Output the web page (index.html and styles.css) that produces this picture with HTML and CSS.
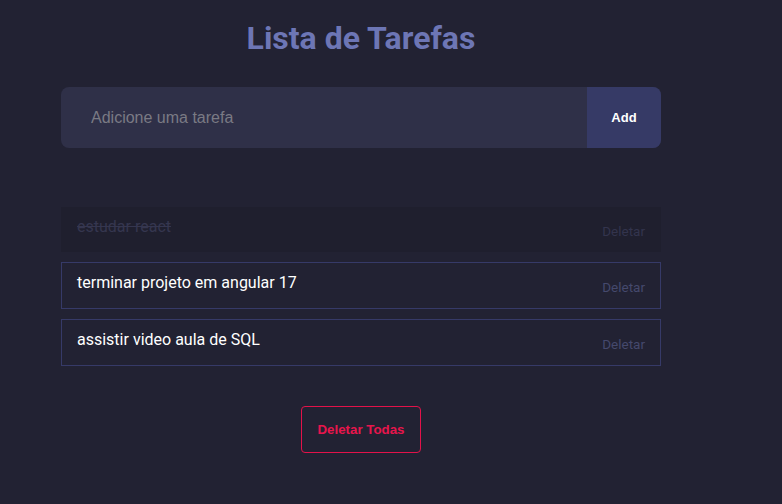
FILE: index.html
```html
<!DOCTYPE html>
<html lang="pt">
<head>
<meta charset="utf-8">
<title>Lista de Tarefas</title>
<link rel="stylesheet" href="styles.css">
</head>
<body>
<main class="app">
  <h1 class="title">Lista de Tarefas</h1>
  <form class="add-form">
    <input class="add-input" type="text" placeholder="Adicione uma tarefa">
    <button class="add-btn" type="button">Add</button>
  </form>
  <ul class="tasks">
    <li class="task done"><span class="task-text">estudar react</span><button class="del" type="button">Deletar</button></li>
    <li class="task"><span class="task-text">terminar projeto em angular 17</span><button class="del" type="button">Deletar</button></li>
    <li class="task"><span class="task-text">assistir video aula de SQL</span><button class="del" type="button">Deletar</button></li>
  </ul>
  <div class="footer">
    <button class="del-all" type="button">Deletar Todas</button>
  </div>
</main>
</body>
</html>
```
FILE: styles.css
```css
html, body {
  margin: 0;
  padding: 0;
  background: #222233;
  height: 100%;
}
body {
  font-family: Roboto, "Liberation Sans", sans-serif;
}
.app {
  width: 600px;
  margin-left: 61px;
  display: flex;
  flex-direction: column;
}
.title {
  margin: 18px 0 0;
  text-align: center;
  font-size: 32px;
  line-height: 40px;
  font-weight: 700;
  color: #6d76b5;
}
.add-form {
  margin-top: 29px;
  display: flex;
  height: 61px;
  border-radius: 8px;
  overflow: hidden;
  background: #2f3048;
}
.add-input {
  flex: 1;
  border: none;
  outline: none;
  background: transparent;
  padding: 0 30px;
  font-family: "Liberation Sans", Arial, sans-serif;
  font-size: 16px;
  color: #ddd;
}
.add-input::placeholder {
  color: #7a7a84;
}
.add-btn {
  width: 74px;
  border: none;
  background: #363a66;
  color: #ffffff;
  font-family: "Liberation Sans", Arial, sans-serif;
  font-weight: 700;
  font-size: 13px;
}
.tasks {
  list-style: none;
  margin: 59px 0 0;
  padding: 0;
  display: flex;
  flex-direction: column;
  gap: 10px;
}
.task {
  box-sizing: border-box;
  height: 47px;
  border: 1px solid #363a68;
  display: flex;
  align-items: center;
  justify-content: space-between;
  padding: 0 15px 0 15px;
}
.task-text {
  color: #ffffff;
  font-size: 16px;
  margin-top: -6px;
}
.del {
  border: none;
  background: transparent;
  padding: 0;
  font-family: Roboto, sans-serif;
  font-size: 13.5px;
  color: #45496d;
  margin-top: 2px;
}
.task.done {
  border-color: transparent;
  background: #1f1f2e;
  height: 45px;
}
.task.done .task-text {
  color: #35364f;
  text-decoration: line-through;
}
.task.done .del {
  color: #33344d;
}
.footer {
  display: flex;
  justify-content: center;
  margin-top: 40px;
}
.del-all {
  width: 120px;
  height: 47px;
  box-sizing: border-box;
  border: 1px solid #e3124a;
  border-radius: 4px;
  background: transparent;
  color: #e8154c;
  font-family: "Liberation Sans", Arial, sans-serif;
  font-weight: 700;
  font-size: 13.3px;
}
```
